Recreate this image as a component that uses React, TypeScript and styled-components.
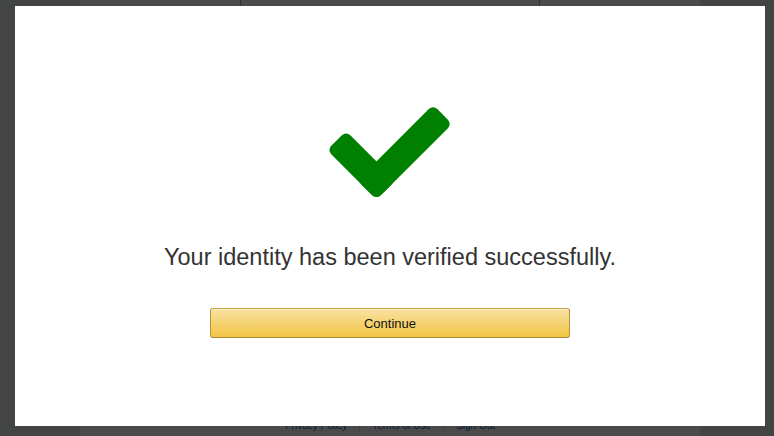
import React from 'react';
import styled, { createGlobalStyle } from 'styled-components';

const GlobalStyle = createGlobalStyle`
  html, body {
    margin: 0;
    padding: 0;
    height: 100%;
    overflow: hidden;
  }
  body {
    background: #e8eeeb;
    font-family: "Liberation Sans", Arial, Helvetica, sans-serif;
  }
`;

// page behind the dialog
const Page = styled.div`
  width: 620px;
  height: 100vh;
  margin-left: 80px;
  background: #fff;
  display: flex;
  flex-direction: column;
  align-items: center;
`;

const TopBox = styled.div`
  width: 298px;
  height: 20px;
  margin-top: -14px;
  border: 1px solid #a8a8a8;
  border-radius: 4px;
`;

const Spacer = styled.div`
  flex: 1;
`;

const Footer = styled.div`
  display: flex;
  align-items: center;
  gap: 12px;
  font-size: 10px;
  line-height: 14px;
  padding-bottom: 3px;
`;

const FooterLink = styled.a`
  color: #0066c0;
  text-decoration: none;
`;

const Sep = styled.span`
  width: 1px;
  height: 12px;
  background: #ddd;
`;

const Overlay = styled.div`
  position: fixed;
  inset: 0;
  background: rgba(0, 0, 0, 0.71);
`;

const Modal = styled.div`
  position: fixed;
  left: 15px;
  top: 6px;
  width: 750px;
  height: 420px;
  background: #fff;
  display: flex;
  flex-direction: column;
  align-items: center;
  padding-top: 91px;
  box-sizing: border-box;
`;

const Message = styled.p`
  margin: 36px 0 0;
  font-size: 23.5px;
  line-height: 28px;
  color: #333;
`;

const ContinueButton = styled.button`
  margin-top: 37px;
  width: 360px;
  height: 30px;
  border: 1px solid;
  border-color: #c8a042 #b8922f #a88734;
  border-radius: 3px;
  background: linear-gradient(to bottom, #f9e1a2, #f1c544);
  font-family: "Liberation Sans", Arial, sans-serif;
  font-size: 13px;
  color: #111;
  cursor: pointer;
  box-shadow: inset 0 1px 0 rgba(255, 255, 255, 0.5);
`;

const Check = () => (
  <svg width="140" height="110" viewBox="320 97 140 110">
    <g transform="translate(376.5 180.5) rotate(-45)" fill="#008000">
      <rect x="-13.5" y="-13.5" width="107" height="27" rx="6" />
    </g>
    <g transform="translate(376.5 180.5) rotate(-135)" fill="#008000">
      <rect x="-13.5" y="-13.5" width="70" height="27" rx="6" />
    </g>
  </svg>
);

export default function App() {
  return (
    <>
      <GlobalStyle />
      <Page>
        <TopBox />
        <Spacer />
        <Footer>
          <FooterLink href="#">Privacy Policy</FooterLink>
          <Sep />
          <FooterLink href="#">Terms of Use</FooterLink>
          <Sep />
          <FooterLink href="#">Sign Out</FooterLink>
        </Footer>
      </Page>
      <Overlay />
      <Modal>
        <Check />
        <Message>Your identity has been verified successfully.</Message>
        <ContinueButton>Continue</ContinueButton>
      </Modal>
    </>
  );
}
